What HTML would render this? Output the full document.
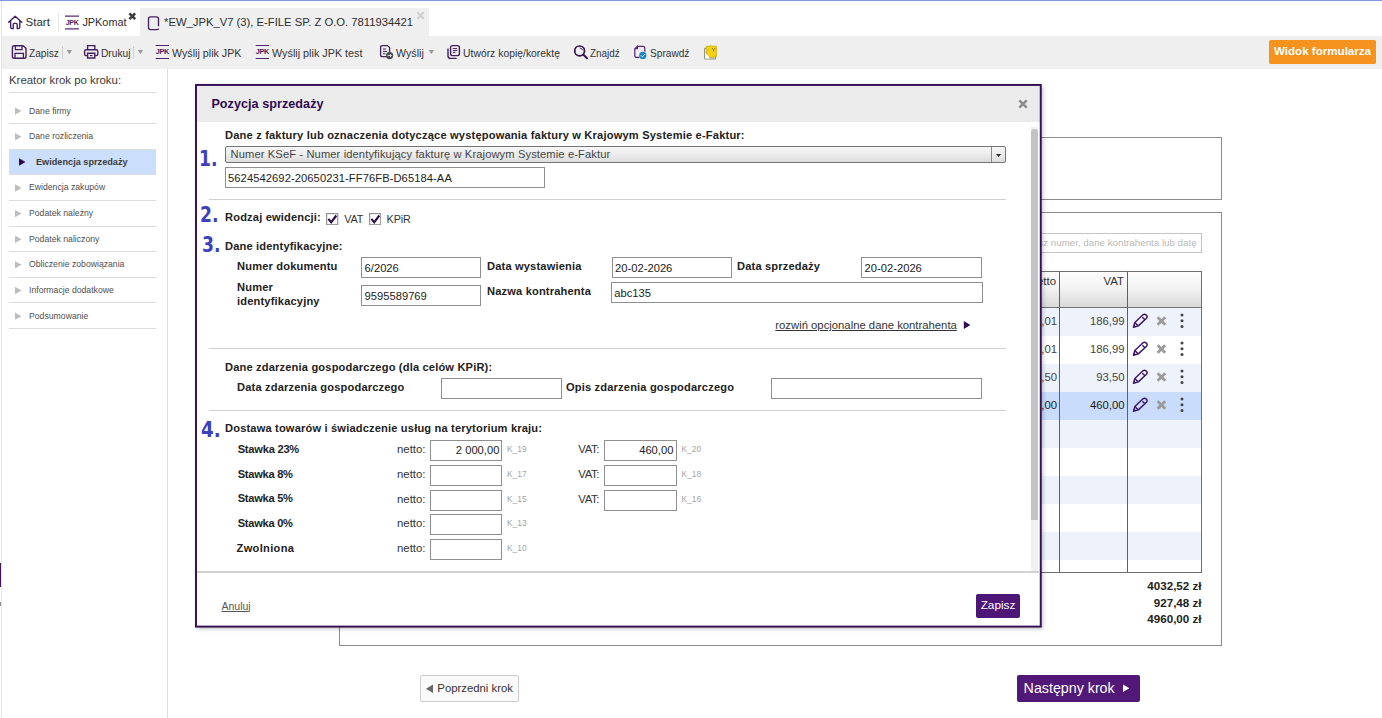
<!DOCTYPE html>
<html lang="pl">
<head>
<meta charset="utf-8">
<title>JPKomat</title>
<style>
*{box-sizing:border-box;margin:0;padding:0}
html,body{width:1382px;height:718px;overflow:hidden;background:#fff}
body{font-family:"Liberation Sans",Arial,sans-serif;font-size:11.4px;color:#333;position:relative}
.a{position:absolute;white-space:nowrap}
.b{font-weight:bold}
.topline{left:0;top:0;width:1382px;height:1px;background:#7f9bd8}
.leftline{left:1.2px;top:1px;width:1px;height:717px;background:#e4e4e4}
.tabbar{left:2.2px;top:1px;width:1380px;height:35px;background:#fff}
.tab2{left:140px;top:8px;width:288.5px;height:28px;background:#efefef}
.toolbar{left:1.5px;top:36px;width:1381px;height:33px;background:#efefef}
.tb{font-size:10.6px;color:#333;top:45.8px;line-height:14px;transform-origin:0 50%}
.sidebar-border{left:167px;top:69px;width:1px;height:649px;background:#dcdcdc}
.nav-line{left:9px;width:147px;height:1px;background:#dcdcdc}
.nav{font-size:8.68px;color:#505050;left:29px;line-height:10px}
.tri{width:6.5px;height:7.4px;background:#bdbdbd;clip-path:polygon(0 0,100% 50%,0 100%);left:15px}
.ibox{border:1px solid #8f8f8f;background:#fff;height:21px;font-size:11.2px;color:#222;line-height:19px;padding-left:2.6px;overflow:hidden}
.lbl{font-weight:bold;color:#222;font-size:11.1px;line-height:14px;letter-spacing:.17px}
.num{font-family:"DejaVu Sans","Liberation Sans",sans-serif;font-weight:bold;color:#3d3fc0;font-size:21.2px;line-height:22px;transform:scaleX(.81);transform-origin:0 50%}
.hr{height:1px;background:#d0d0d0}
.k{font-size:8.4px;color:#a4a4a4;line-height:9px;margin-top:.6px}
.net{font-size:11.4px;color:#333;line-height:14px}
</style>
</head>
<body>
<div class="a topline"></div>
<div class="a leftline"></div>
<div class="a tabbar"></div>
<div class="a tab2"></div>
<div class="a toolbar"></div>
<div class="a sidebar-border"></div>
<!--TABS-->
<svg class="a" style="left:7px;top:14px" width="17" height="17" viewBox="0 0 17 17"><path d="M1.6 8.3 L8.2 2.2 L14.8 8.3 M3.6 6.8 V13 Q3.6 14.6 5.2 14.6 H6.2 V10.6 Q6.2 9.4 7.4 9.4 H9 Q10.2 9.4 10.2 10.6 V14.6 H11.2 Q12.8 14.6 12.8 13 V6.8" fill="none" stroke="#45205f" stroke-width="1.4" stroke-linejoin="round" stroke-linecap="round"/></svg>
<div class="a" style="left:25.6px;top:15px;font-size:11.5px;line-height:14px;color:#2e2e2e">Start</div>
<div class="a" style="left:58px;top:13px;width:1px;height:19px;background:#e6e6e6"></div>
<svg class="a jpk" style="left:65px;top:15px" width="14" height="15" viewBox="0 0 14 15"><path d="M0 1.2H14M0 13.8H14" stroke="#5b2a78" stroke-width="1.3"/><text x="7.1" y="10.2" text-anchor="middle" font-family="Liberation Sans,sans-serif" font-weight="bold" font-size="7" letter-spacing="-.3" fill="#45205f">JPK</text></svg>
<div class="a" style="left:82.4px;top:15px;font-size:10.9px;line-height:14px;color:#2e2e2e">JPKomat</div>
<svg class="a" style="left:128px;top:11.5px" width="9" height="9" viewBox="0 0 9 9"><path d="M1.4 1.4L7.2 7.2M7.2 1.4L1.4 7.2" stroke="#3c3c3c" stroke-width="2.5"/></svg>
<svg class="a" style="left:146px;top:14px" width="14" height="17" viewBox="0 0 14 17"><path d="M12.5 12.2V4.8Q12.5 2.8 10.5 2.8H4.5Q2.5 2.8 2.5 4.8V13.6Q2.5 15.6 4.5 15.6H10.5Q12.5 15.6 12.5 14.4" fill="none" stroke="#45205f" stroke-width="1.35"/></svg>
<div class="a" style="left:164px;top:15px;font-size:11.25px;line-height:14px;color:#2e2e2e">*EW_JPK_V7 (3), E-FILE SP. Z O.O. 7811934421</div>
<svg class="a" style="left:416.4px;top:11.4px" width="9" height="9" viewBox="0 0 9 9"><path d="M1.3 1.3L7.7 7.7M7.7 1.3L1.3 7.7" stroke="#cfcfcf" stroke-width="2"/></svg>
<!--TOOLBAR-->
<svg class="a" style="left:11px;top:44px" width="17" height="16" viewBox="0 0 17 16"><path d="M3 1.7H12.2L15 4.4V12.4Q15 14.2 13.2 14.2H3Q1.4 14.2 1.4 12.4V3.4Q1.4 1.7 3 1.7Z" fill="none" stroke="#45205f" stroke-width="1.4" stroke-linejoin="round"/><path d="M4.4 2V5.6H11V2M4 14V9.3H12.4V14" fill="none" stroke="#45205f" stroke-width="1.3"/></svg>
<div class="a tb" style="left:28.5px;transform:scaleX(0.953)">Zapisz</div>
<div class="a" style="left:62.2px;top:45.5px;width:1px;height:13px;background:#d0d0d0"></div>
<div class="a" style="left:66.4px;top:49.6px;width:6px;height:4.6px;background:#9a9a9a;clip-path:polygon(0 0,100% 0,50% 100%)"></div>
<svg class="a" style="left:83px;top:44px" width="17" height="16" viewBox="0 0 17 16"><path d="M4.6 5.6V1.6H11.8V5.6" fill="none" stroke="#45205f" stroke-width="1.4"/><path d="M4.4 11.6H3.2Q1.6 11.6 1.6 10V7.4Q1.6 5.8 3.2 5.8H13.2Q14.8 5.8 14.8 7.4V10Q14.8 11.6 13.2 11.6H12" fill="none" stroke="#45205f" stroke-width="1.4"/><path d="M4.6 9.2H11.8V14H4.6Z" fill="none" stroke="#45205f" stroke-width="1.4"/><path d="M7 11.6H9.4" stroke="#45205f" stroke-width="1.2"/></svg>
<div class="a tb" style="left:100.6px;transform:scaleX(0.963)">Drukuj</div>
<div class="a" style="left:133.2px;top:45.5px;width:1px;height:13px;background:#d0d0d0"></div>
<div class="a" style="left:137.4px;top:49.6px;width:6px;height:4.6px;background:#9a9a9a;clip-path:polygon(0 0,100% 0,50% 100%)"></div>
<svg class="a" style="left:155px;top:45px" width="15" height="15" viewBox="0 0 15 15"><path d="M1.2 .4H13.5M1.2 13.5H13.5" stroke="#4f2170" stroke-width="1.2" stroke-linecap="round"/><text x="7.4" y="9.4" text-anchor="middle" font-family="Liberation Sans,sans-serif" font-weight="bold" font-size="7.3" letter-spacing="-.35" fill="#45205f">JPK</text></svg>
<div class="a tb" style="left:172px;transform:scaleX(1.010)">Wyślij plik JPK</div>
<svg class="a" style="left:255px;top:45px" width="15" height="15" viewBox="0 0 15 15"><path d="M1.2 .4H13.5M1.2 13.5H13.5" stroke="#4f2170" stroke-width="1.2" stroke-linecap="round"/><text x="7.4" y="9.4" text-anchor="middle" font-family="Liberation Sans,sans-serif" font-weight="bold" font-size="7.3" letter-spacing="-.35" fill="#45205f">JPK</text></svg>
<div class="a tb" style="left:272px;transform:scaleX(1.019)">Wyślij plik JPK test</div>
<svg class="a" style="left:379px;top:44px" width="16" height="17" viewBox="0 0 16 17"><path d="M3.2 1.6H8.4L10.6 3.6V11Q10.6 12.6 9 12.6H3.2Q1.6 12.6 1.6 11V3.2Q1.6 1.6 3.2 1.6Z" fill="none" stroke="#45205f" stroke-width="1.3"/><path d="M4 5H7M4 7.4H8M4 9.8H6.4" stroke="#45205f" stroke-width="1"/><circle cx="10.6" cy="11.6" r="3.6" fill="#4a4a4a"/><path d="M8.6 11.6H12.4M11 10.2L12.5 11.6L11 13" stroke="#eee" stroke-width=".9" fill="none"/></svg>
<div class="a tb" style="left:396px;transform:scaleX(1.009)">Wyślij</div>
<div class="a" style="left:428.4px;top:49.6px;width:6px;height:4.6px;background:#9a9a9a;clip-path:polygon(0 0,100% 0,50% 100%)"></div>
<svg class="a" style="left:446px;top:44px" width="16" height="17" viewBox="0 0 16 17"><path d="M6.4 1.6H11.6Q13.4 1.6 13.4 3.4V9.8Q13.4 11.6 11.6 11.6H6.4Q4.6 11.6 4.6 9.8V3.4Q4.6 1.6 6.4 1.6Z" fill="none" stroke="#45205f" stroke-width="1.4"/><path d="M2 4.6V12Q2 14.4 4.4 14.4H10.6" fill="none" stroke="#45205f" stroke-width="1.4"/><path d="M6.8 4.6H11.2M6.8 6.6H11.2M6.8 8.6H9.4" stroke="#45205f" stroke-width="1"/></svg>
<div class="a tb" style="left:463px;transform:scaleX(0.980)">Utwórz kopię/korektę</div>
<svg class="a" style="left:572px;top:44px" width="17" height="16" viewBox="0 0 17 16"><circle cx="7.6" cy="6.9" r="4.9" fill="none" stroke="#35104f" stroke-width="1.7"/><path d="M11.2 10.6L15 14.2" stroke="#35104f" stroke-width="2" stroke-linecap="round"/><path d="M7.8 4Q10 4.2 10.6 6.2" fill="none" stroke="#35104f" stroke-width=".9"/></svg>
<div class="a tb" style="left:590px;transform:scaleX(0.931)">Znajdź</div>
<svg class="a" style="left:633px;top:44px" width="16" height="17" viewBox="0 0 16 17"><path d="M4.4 2.3H10Q11.8 2.3 11.8 4.1V7.8M6.6 13.4H3.6Q1.8 13.4 1.8 11.6V4.7L4.4 2.3V4.7H1.8" fill="none" stroke="#5b2a78" stroke-width="1.25"/><circle cx="9.8" cy="11.4" r="3.6" fill="#1a86c7"/><path d="M8 11.4L9.4 12.8L11.8 10.2" stroke="#fff" stroke-width="1" fill="none"/></svg>
<div class="a tb" style="left:650px;transform:scaleX(0.956)">Sprawdź</div>
<svg class="a" style="left:703px;top:44px" width="15" height="16" viewBox="0 0 15 16"><path d="M1.6 4.2H12.6V15H1.6Z" fill="#e4e4de" stroke="#8f8f7c" stroke-width="1"/><path d="M3.6 2.2H6.6Q7.6 .4 8.6 2.2H13.4V12.4L11 13.4H3.6Z" fill="#f3d10f" stroke="#c4a614" stroke-width=".7"/><path d="M9 4L10.6 5.8L12 4.2M10.6 5.8V7.4" stroke="#8a7400" stroke-width=".9" fill="none"/><path d="M2.2 9.6Q5.4 10.6 6.4 14.4H2.2Z" fill="#fff"/></svg>
<div class="a b" style="left:1269px;top:40px;width:107px;height:23.5px;background:#f6921e;border-radius:1.5px;color:#fff;font-size:11.6px;line-height:22.8px;text-align:center">Widok formularza</div>
<!--SIDEBAR-->
<div class="a" style="left:9px;top:73px;font-size:11.4px;line-height:14px;color:#3a3a3a">Kreator krok po kroku:</div>
<div class="a" style="left:9px;top:148.9px;width:147px;height:26px;background:#cbdefc"></div>
<div class="a nav-line" style="top:92px"></div>
<div class="a nav-line" style="top:123.00px"></div>
<div class="a nav-line" style="top:148.63px"></div>
<div class="a nav-line" style="top:174.26px"></div>
<div class="a nav-line" style="top:199.89px"></div>
<div class="a nav-line" style="top:225.52px"></div>
<div class="a nav-line" style="top:251.15px"></div>
<div class="a nav-line" style="top:276.78px"></div>
<div class="a nav-line" style="top:302.41px"></div>
<div class="a nav-line" style="top:328.04px"></div>
<div class="a tri" style="top:107.40px"></div>
<div class="a nav" style="top:105.60px">Dane firmy</div>
<div class="a tri" style="top:133.03px"></div>
<div class="a nav" style="top:131.23px">Dane rozliczenia</div>
<div class="a tri" style="top:158.36px;left:19px;background:#2e0a4f"></div>
<div class="a nav b" style="top:156.66px;left:36px;font-size:9.17px;color:#3c3c3c">Ewidencja sprzedaży</div>
<div class="a tri" style="top:184.29px"></div>
<div class="a nav" style="top:182.49px">Ewidencja zakupów</div>
<div class="a tri" style="top:209.92px"></div>
<div class="a nav" style="top:208.12px">Podatek należny</div>
<div class="a tri" style="top:235.55px"></div>
<div class="a nav" style="top:233.75px">Podatek naliczony</div>
<div class="a tri" style="top:261.18px"></div>
<div class="a nav" style="top:259.38px">Obliczenie zobowiązania</div>
<div class="a tri" style="top:286.81px"></div>
<div class="a nav" style="top:285.01px">Informacje dodatkowe</div>
<div class="a tri" style="top:312.44px"></div>
<div class="a nav" style="top:310.64px">Podsumowanie</div>
<div class="a" style="left:0;top:563px;width:1px;height:23.5px;background:#3b1460"></div>
<div class="a" style="left:0;top:601.5px;width:1px;height:4.5px;background:#8a8a8a"></div>
<!--BACKGROUND-->
<div class="a" style="left:339px;top:137px;width:883px;height:63px;border:1px solid #8c8c8c"></div>
<div class="a" style="left:339px;top:212px;width:883px;height:434px;border:1px solid #8c8c8c"></div>
<div class="a" style="left:900px;top:233px;width:302px;height:20px;border:1px solid #c4c4c4;font-size:9.75px;line-height:18px;color:#b9b9b9;text-align:right;padding-right:4.4px">Wpisz numer, dane kontrahenta lub datę</div>
<div class="a" style="left:360px;top:271px;width:842px;height:37px;background:linear-gradient(#fdfdfd 0%,#f3f3f3 45%,#d8d8d8 100%)"></div>
<div class="a" style="left:360px;top:307.50px;width:842px;height:28.07px;background:#eef3fb"></div>
<div class="a" style="left:360px;top:335.57px;width:842px;height:28.07px;background:#fff"></div>
<div class="a" style="left:360px;top:363.64px;width:842px;height:28.07px;background:#eef3fb"></div>
<div class="a" style="left:360px;top:391.71px;width:842px;height:28.07px;background:#cadcfb"></div>
<div class="a" style="left:360px;top:419.78px;width:842px;height:28.07px;background:#eef3fb"></div>
<div class="a" style="left:360px;top:447.85px;width:842px;height:28.07px;background:#fff"></div>
<div class="a" style="left:360px;top:475.92px;width:842px;height:28.07px;background:#eef3fb"></div>
<div class="a" style="left:360px;top:503.99px;width:842px;height:28.07px;background:#fff"></div>
<div class="a" style="left:360px;top:532.06px;width:842px;height:28.07px;background:#eef3fb"></div>
<div class="a" style="left:360px;top:560.13px;width:842px;height:11.87px;background:#fff"></div>
<div class="a" style="left:360px;top:271px;width:842px;height:301.5px;border:1px solid #707070"></div>
<div class="a" style="left:360px;top:307px;width:842px;height:1px;background:#707070"></div>
<div class="a" style="left:1059px;top:271px;width:1px;height:301px;background:#606060"></div>
<div class="a" style="left:1127px;top:271px;width:1px;height:301px;background:#606060"></div>
<div class="a" style="left:1000px;top:274.4px;width:56px;text-align:right;font-size:11.4px;line-height:14px;color:#333">Netto</div>
<div class="a" style="left:1070px;top:274.4px;width:54px;text-align:right;font-size:11.4px;line-height:14px;color:#333">VAT</div>
<div class="a" style="left:990px;top:313.70px;width:67px;text-align:right;font-size:11.3px;line-height:14px;color:#444">813,01</div>
<div class="a" style="left:1065px;top:313.70px;width:59.5px;text-align:right;font-size:11.3px;line-height:14px;color:#444">186,99</div>
<svg class="a" style="left:1132px;top:312.70px" width="17" height="16" viewBox="0 0 17 16"><path d="M1.5 14.3L2.8 9.5L11 1.8Q12.6 .6 14.3 2.1Q15.8 3.7 14.5 5.2L6.3 12.9Z M2.8 9.5L6.3 12.9 M10.4 4.2L12.6 6.4" fill="none" stroke="#3d1766" stroke-width="1.45" stroke-linejoin="round"/><path d="M1.5 14.3L2.2 11.7L4.2 13.6Z" fill="#3d1766"/></svg>
<svg class="a" style="left:1156px;top:315.70px" width="11" height="10" viewBox="0 0 11 10"><path d="M1.6 1.2L9.2 8.8M9.2 1.2L1.6 8.8" stroke="#9b9b9b" stroke-width="2.8"/></svg>
<svg class="a" style="left:1179px;top:311.70px" width="6" height="18" viewBox="0 0 6 18"><circle cx="3" cy="3" r="1.5" fill="#444"/><circle cx="3" cy="8.7" r="1.5" fill="#444"/><circle cx="3" cy="14.4" r="1.5" fill="#444"/></svg>
<div class="a" style="left:990px;top:341.77px;width:67px;text-align:right;font-size:11.3px;line-height:14px;color:#444">813,01</div>
<div class="a" style="left:1065px;top:341.77px;width:59.5px;text-align:right;font-size:11.3px;line-height:14px;color:#444">186,99</div>
<svg class="a" style="left:1132px;top:340.77px" width="17" height="16" viewBox="0 0 17 16"><path d="M1.5 14.3L2.8 9.5L11 1.8Q12.6 .6 14.3 2.1Q15.8 3.7 14.5 5.2L6.3 12.9Z M2.8 9.5L6.3 12.9 M10.4 4.2L12.6 6.4" fill="none" stroke="#3d1766" stroke-width="1.45" stroke-linejoin="round"/><path d="M1.5 14.3L2.2 11.7L4.2 13.6Z" fill="#3d1766"/></svg>
<svg class="a" style="left:1156px;top:343.77px" width="11" height="10" viewBox="0 0 11 10"><path d="M1.6 1.2L9.2 8.8M9.2 1.2L1.6 8.8" stroke="#9b9b9b" stroke-width="2.8"/></svg>
<svg class="a" style="left:1179px;top:339.77px" width="6" height="18" viewBox="0 0 6 18"><circle cx="3" cy="3" r="1.5" fill="#444"/><circle cx="3" cy="8.7" r="1.5" fill="#444"/><circle cx="3" cy="14.4" r="1.5" fill="#444"/></svg>
<div class="a" style="left:990px;top:369.84px;width:67px;text-align:right;font-size:11.3px;line-height:14px;color:#444">406,50</div>
<div class="a" style="left:1065px;top:369.84px;width:59.5px;text-align:right;font-size:11.3px;line-height:14px;color:#444">93,50</div>
<svg class="a" style="left:1132px;top:368.84px" width="17" height="16" viewBox="0 0 17 16"><path d="M1.5 14.3L2.8 9.5L11 1.8Q12.6 .6 14.3 2.1Q15.8 3.7 14.5 5.2L6.3 12.9Z M2.8 9.5L6.3 12.9 M10.4 4.2L12.6 6.4" fill="none" stroke="#3d1766" stroke-width="1.45" stroke-linejoin="round"/><path d="M1.5 14.3L2.2 11.7L4.2 13.6Z" fill="#3d1766"/></svg>
<svg class="a" style="left:1156px;top:371.84px" width="11" height="10" viewBox="0 0 11 10"><path d="M1.6 1.2L9.2 8.8M9.2 1.2L1.6 8.8" stroke="#9b9b9b" stroke-width="2.8"/></svg>
<svg class="a" style="left:1179px;top:367.84px" width="6" height="18" viewBox="0 0 6 18"><circle cx="3" cy="3" r="1.5" fill="#444"/><circle cx="3" cy="8.7" r="1.5" fill="#444"/><circle cx="3" cy="14.4" r="1.5" fill="#444"/></svg>
<div class="a" style="left:990px;top:397.91px;width:67px;text-align:right;font-size:11.3px;line-height:14px;color:#1a1a1a">2 000,00</div>
<div class="a" style="left:1065px;top:397.91px;width:59.5px;text-align:right;font-size:11.3px;line-height:14px;color:#1a1a1a">460,00</div>
<svg class="a" style="left:1132px;top:396.91px" width="17" height="16" viewBox="0 0 17 16"><path d="M1.5 14.3L2.8 9.5L11 1.8Q12.6 .6 14.3 2.1Q15.8 3.7 14.5 5.2L6.3 12.9Z M2.8 9.5L6.3 12.9 M10.4 4.2L12.6 6.4" fill="none" stroke="#3d1766" stroke-width="1.45" stroke-linejoin="round"/><path d="M1.5 14.3L2.2 11.7L4.2 13.6Z" fill="#3d1766"/></svg>
<svg class="a" style="left:1156px;top:399.91px" width="11" height="10" viewBox="0 0 11 10"><path d="M1.6 1.2L9.2 8.8M9.2 1.2L1.6 8.8" stroke="#9b9b9b" stroke-width="2.8"/></svg>
<svg class="a" style="left:1179px;top:395.91px" width="6" height="18" viewBox="0 0 6 18"><circle cx="3" cy="3" r="1.5" fill="#444"/><circle cx="3" cy="8.7" r="1.5" fill="#444"/><circle cx="3" cy="14.4" r="1.5" fill="#444"/></svg>
<div class="a b" style="left:1100px;top:579px;width:101.5px;text-align:right;font-size:11.6px;line-height:14px;color:#222">4032,52 zł</div>
<div class="a b" style="left:1100px;top:595.5px;width:101.5px;text-align:right;font-size:11.6px;line-height:14px;color:#222">927,48 zł</div>
<div class="a b" style="left:1100px;top:612px;width:101.5px;text-align:right;font-size:11.6px;line-height:14px;color:#222">4960,00 zł</div>
<div class="a" style="left:420px;top:675px;width:99px;height:27px;border:1px solid #ccc;border-radius:2px;background:#fafafa;font-size:11.35px;line-height:25px;color:#333;text-align:center"><span style="display:inline-block;width:7px;height:8.6px;background:#666;clip-path:polygon(100% 0,0 50%,100% 100%);margin-right:4.3px;vertical-align:-1px"></span>Poprzedni krok</div>
<div class="a" style="left:1017px;top:674.8px;width:122.6px;height:26.8px;border-radius:2px;background:#521878;font-size:14.25px;line-height:26.4px;color:#fff;padding-left:6.6px">Następny krok</div>
<div class="a" style="left:1123px;top:684.4px;width:6.4px;height:7.6px;background:#fff;clip-path:polygon(0 0,100% 50%,0 100%)"></div>
<!--MODAL-->
<div class="a" style="left:195px;top:84px;width:846.4px;height:543.2px;background:#fff;box-shadow:1.5px 1.5px 4px rgba(0,0,0,.24)"></div>
<div class="a" style="left:197px;top:86px;width:843px;height:36px;background:#ebebeb"></div>
<svg class="a" style="left:190px;top:80px" width="860" height="555" viewBox="0 0 860 555"><rect x="6" y="4.95" width="844.75" height="541.65" fill="none" stroke="#341055" stroke-width="1.95"/></svg>
<div class="a b" style="left:211.4px;top:95.5px;font-size:12.6px;line-height:16px;color:#2e0a4f;letter-spacing:.05px">Pozycja sprzedaży</div>
<svg class="a" style="left:1018px;top:99px" width="10" height="10" viewBox="0 0 10 10"><path d="M1.3 1.3L8.7 8.7M8.7 1.3L1.3 8.7" stroke="#8c8c8c" stroke-width="2.5"/></svg>
<div class="a" style="left:1031px;top:127px;width:7.2px;height:445px;background:#f1f1f1"></div>
<div class="a" style="left:1031px;top:129px;width:7.2px;height:391px;background:#c3c3c3;border-radius:3px 3px 0 0"></div>
<div class="a lbl" style="left:225px;top:128px;letter-spacing:.185px">Dane z faktury lub oznaczenia dotyczące występowania faktury w Krajowym Systemie e-Faktur:</div>
<div class="a num" style="left:198.6px;top:148.2px">1.</div>
<div class="a" style="left:225px;top:146px;width:781px;height:17px;border:1px solid #747474;border-radius:2px;background:linear-gradient(#f7f7f7,#ececec 50%,#dcdcdc);font-size:11.15px;line-height:14.6px;color:#444;padding-left:4.6px;letter-spacing:.118px">Numer KSeF - Numer identyfikujący fakturę w Krajowym Systemie e-Faktur</div>
<div class="a" style="left:991px;top:147px;width:1px;height:15px;background:#8a8a8a"></div>
<div class="a" style="left:995.6px;top:153.6px;width:6px;height:3.4px;background:#2a2a2a;clip-path:polygon(0 0,100% 0,50% 100%)"></div>
<div class="a ibox" style="left:225px;top:167px;width:320px;height:21px;padding:1.2px 0 0 2px;letter-spacing:.07px">5624542692-20650231-FF76FB-D65184-AA</div>
<div class="a hr" style="left:209px;top:199px;width:797px"></div>
<div class="a num" style="left:200.3px;top:203.6px">2.</div>
<div class="a lbl" style="left:225px;top:210px">Rodzaj ewidencji:</div>
<svg class="a" style="left:326.4px;top:212.8px" width="12.3" height="12.3" viewBox="0 0 12.3 12.3"><rect x=".6" y=".6" width="11.1" height="11.1" fill="#fff" stroke="#949494" stroke-width="1.2"/><path d="M2.4 5.9L5.2 9.3L10.3 2.5" fill="none" stroke="#2a0a4a" stroke-width="2.1"/></svg>
<div class="a net" style="left:344.2px;top:212.2px;color:#333;font-size:10.8px;letter-spacing:-.15px">VAT</div>
<svg class="a" style="left:369px;top:212.8px" width="12.3" height="12.3" viewBox="0 0 12.3 12.3"><rect x=".6" y=".6" width="11.1" height="11.1" fill="#fff" stroke="#949494" stroke-width="1.2"/><path d="M2.4 5.9L5.2 9.3L10.3 2.5" fill="none" stroke="#2a0a4a" stroke-width="2.1"/></svg>
<div class="a net" style="left:386.6px;top:212.2px;color:#333;font-size:10.8px;letter-spacing:-.15px">KPiR</div>
<div class="a num" style="left:202.3px;top:234px">3.</div>
<div class="a lbl" style="left:225px;top:238.5px">Dane identyfikacyjne:</div>
<div class="a lbl" style="left:237px;top:259px">Numer dokumentu</div>
<div class="a ibox" style="left:361px;top:257px;width:120px;height:21px;padding-top:1px">6/2026</div>
<div class="a lbl" style="left:487px;top:259px">Data wystawienia</div>
<div class="a ibox" style="left:611.5px;top:257px;width:120.5px;height:21px;padding-top:1px">20-02-2026</div>
<div class="a lbl" style="left:737px;top:259px">Data sprzedaży</div>
<div class="a ibox" style="left:861px;top:257px;width:120.5px;height:21px;padding-top:1px">20-02-2026</div>
<div class="a lbl" style="left:237px;top:279.5px;line-height:14.2px">Numer<br>identyfikacyjny</div>
<div class="a ibox" style="left:361px;top:285.3px;width:120px;height:21px;padding-top:1px">9595589769</div>
<div class="a lbl" style="left:487px;top:284px">Nazwa kontrahenta</div>
<div class="a ibox" style="left:610.6px;top:282px;width:372px;height:21px;padding-top:1px">abc135</div>
<div class="a" style="left:775.3px;top:318px;font-size:11.3px;line-height:14px;color:#333;text-decoration:underline">rozwiń opcjonalne dane kontrahenta</div>
<svg class="a" style="left:963px;top:320px" width="9" height="10" viewBox="0 0 9 10"><path d="M.8 .9L7.4 4.9L.8 8.9Z" fill="#2e0a4f"/></svg>
<div class="a hr" style="left:209px;top:348.4px;width:797px"></div>
<div class="a lbl" style="left:225px;top:359.5px">Dane zdarzenia gospodarczego (dla celów KPiR):</div>
<div class="a lbl" style="left:237px;top:380px">Data zdarzenia gospodarczego</div>
<div class="a ibox" style="left:441px;top:378.2px;width:120.5px;height:20.6px"></div>
<div class="a lbl" style="left:566px;top:380px">Opis zdarzenia gospodarczego</div>
<div class="a ibox" style="left:770.6px;top:378.2px;width:211.4px;height:20.6px"></div>
<div class="a hr" style="left:209px;top:410.2px;width:797px"></div>
<div class="a num" style="left:200.5px;top:418.9px;transform:scaleX(.86)">4.</div>
<div class="a lbl" style="left:225px;top:420.5px">Dostawa towarów i świadczenie usług na terytorium kraju:</div>
<div class="a lbl" style="left:237.7px;top:441.7px;letter-spacing:-0.22px">Stawka 23%</div>
<div class="a net" style="left:397px;top:442.0px">netto:</div>
<div class="a ibox" style="left:430px;top:440.0px;width:72.4px;height:21px;text-align:right;padding:.3px 2px 0 0;font-size:11.2px">2 000,00</div>
<div class="a k" style="left:507px;top:444.4px">K_19</div>
<div class="a net" style="left:578.3px;top:442.0px;letter-spacing:-.4px">VAT:</div>
<div class="a ibox" style="left:604.2px;top:440.0px;width:72.6px;height:21px;text-align:right;padding:.3px 2.4px 0 0;font-size:11.2px">460,00</div>
<div class="a k" style="left:681.5px;top:444.4px">K_20</div>
<div class="a lbl" style="left:237.7px;top:466.5px;letter-spacing:-0.26px">Stawka 8%</div>
<div class="a net" style="left:397px;top:466.8px">netto:</div>
<div class="a ibox" style="left:430px;top:464.8px;width:72.4px;height:21px;text-align:right;padding:.3px 2px 0 0;font-size:11.2px"></div>
<div class="a k" style="left:507px;top:469.2px">K_17</div>
<div class="a net" style="left:578.3px;top:466.8px;letter-spacing:-.4px">VAT:</div>
<div class="a ibox" style="left:604.2px;top:464.8px;width:72.6px;height:21px;text-align:right;padding:.3px 2.4px 0 0;font-size:11.2px"></div>
<div class="a k" style="left:681.5px;top:469.2px">K_18</div>
<div class="a lbl" style="left:237.7px;top:491.3px;letter-spacing:-0.26px">Stawka 5%</div>
<div class="a net" style="left:397px;top:491.6px">netto:</div>
<div class="a ibox" style="left:430px;top:489.6px;width:72.4px;height:21px;text-align:right;padding:.3px 2px 0 0;font-size:11.2px"></div>
<div class="a k" style="left:507px;top:494.0px">K_15</div>
<div class="a net" style="left:578.3px;top:491.6px;letter-spacing:-.4px">VAT:</div>
<div class="a ibox" style="left:604.2px;top:489.6px;width:72.6px;height:21px;text-align:right;padding:.3px 2.4px 0 0;font-size:11.2px"></div>
<div class="a k" style="left:681.5px;top:494.0px">K_16</div>
<div class="a lbl" style="left:237.7px;top:516.0px;letter-spacing:-0.26px">Stawka 0%</div>
<div class="a net" style="left:397px;top:516.3px">netto:</div>
<div class="a ibox" style="left:430px;top:514.3px;width:72.4px;height:21px;text-align:right;padding:.3px 2px 0 0;font-size:11.2px"></div>
<div class="a k" style="left:507px;top:518.7px">K_13</div>
<div class="a lbl" style="left:236.6px;top:540.8px;letter-spacing:.31px">Zwolniona</div>
<div class="a net" style="left:397px;top:541.1px">netto:</div>
<div class="a ibox" style="left:430px;top:539.1px;width:72.4px;height:21px;text-align:right;padding:.3px 2px 0 0;font-size:11.2px"></div>
<div class="a k" style="left:507px;top:543.5px">K_10</div>
<div class="a" style="left:197px;top:571.4px;width:843px;height:1.4px;background:#d2d2d2"></div>
<div class="a" style="left:221.5px;top:598.8px;font-size:10.5px;line-height:14px;color:#555;text-decoration:underline">Anuluj</div>
<div class="a" style="left:976px;top:594.2px;width:44px;height:23.6px;background:#4e1676;border-radius:2px;color:#fff;font-size:11.8px;line-height:23.6px;text-align:center">Zapisz</div>
</body>
</html>
